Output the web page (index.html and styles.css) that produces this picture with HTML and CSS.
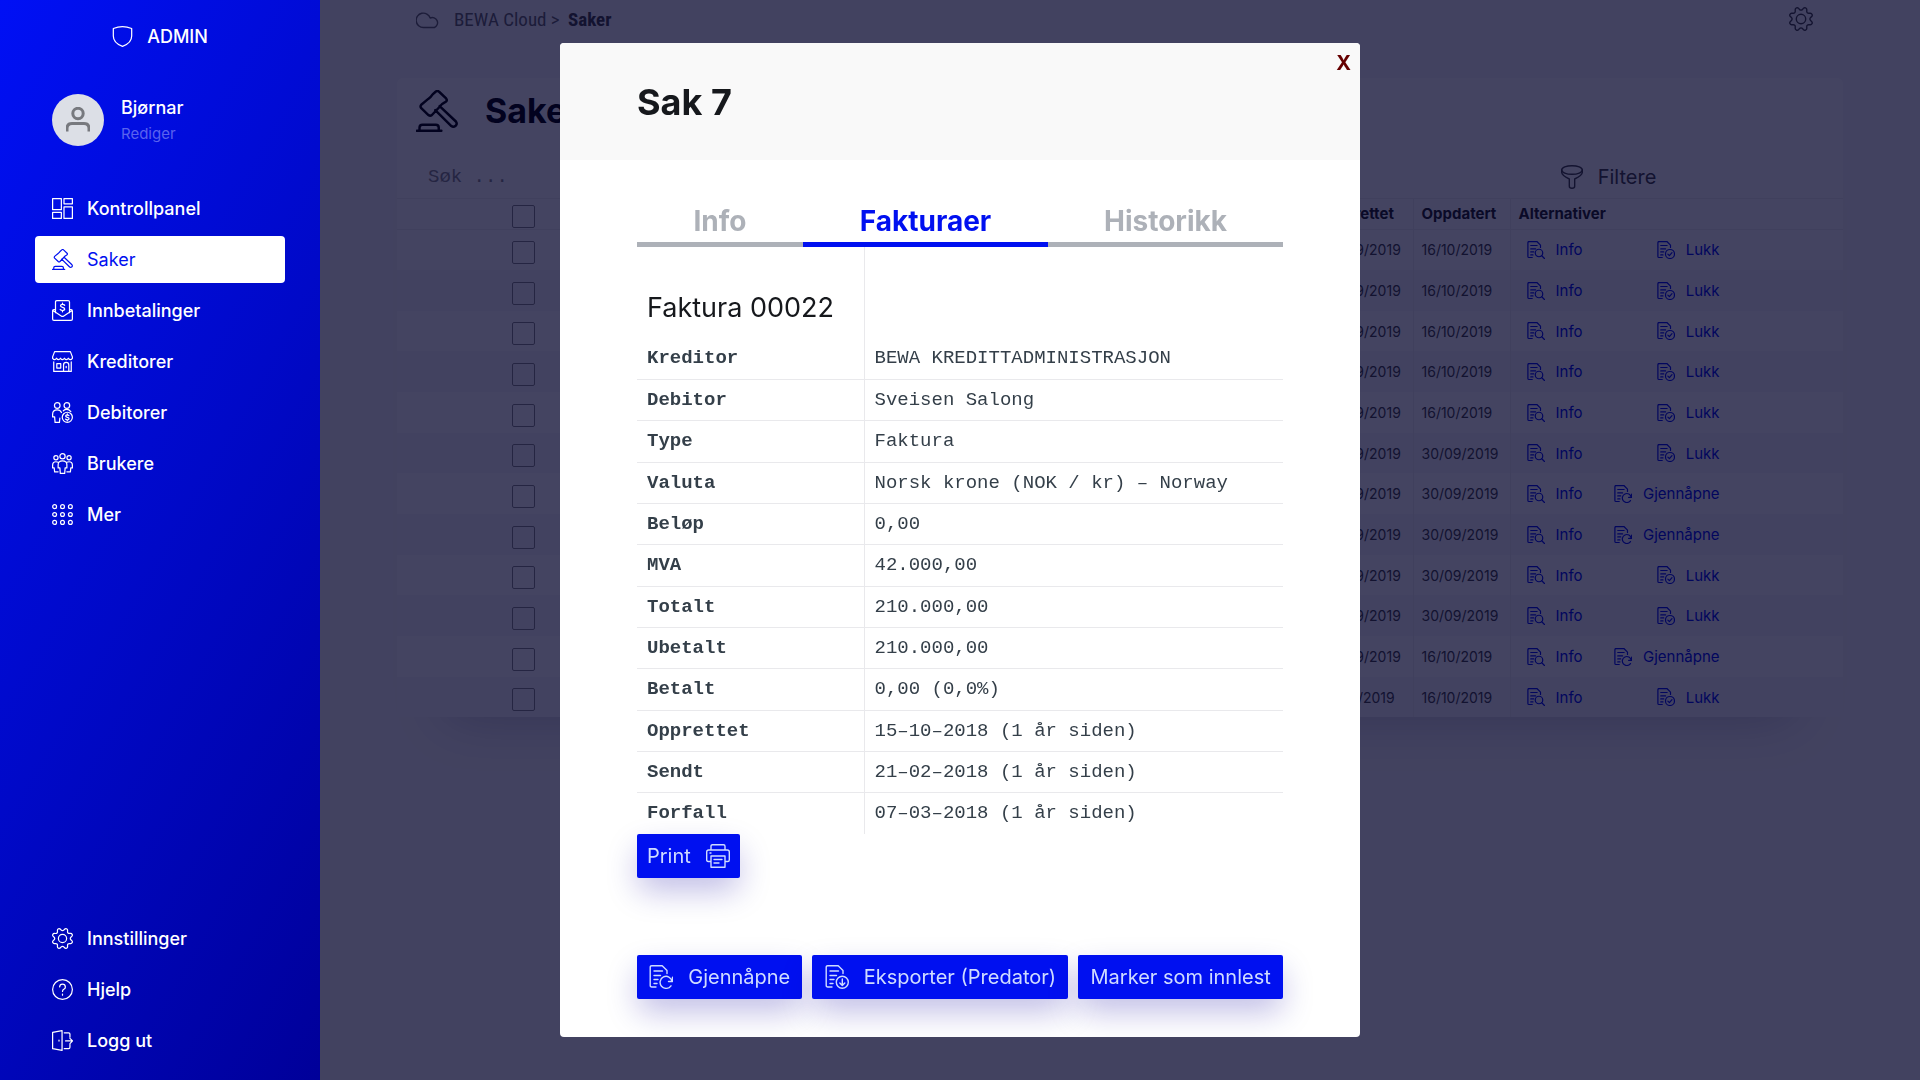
FILE: index.html
```html
<!DOCTYPE html>
<html lang="no">
<head>
<meta charset="utf-8">
<title>BEWA Cloud</title>
<link rel="stylesheet" href="styles.css">
</head>
<body>
<svg class="sprite" aria-hidden="true">
  <symbol id="i-shield" viewBox="0 0 24 24"><path d="M1.500 2.800Q12-1.200 22.500 2.800V11.500c0 5.500-4 9.500-10.500 11.800C5.500 21 1.500 17 1.500 11.500Z"/></symbol>
  <symbol id="i-dash" viewBox="0 0 24 24"><path d="M.7.7h10v12.600h-10zM13.700.7h9.600v6h-9.600zM.7 16.500h10v6.800h-10zM13.700 10.200h9.600v13.100h-9.600z"/></symbol>
  <symbol id="i-gavel" viewBox="0 0 24 24"><path d="M11.200 1q1-1 2 0l4 3.800q.8 1 0 1.800l-.8.500q-2 1-3 2.600l-4.300 4.600q-1 .8-2 0L3 10.400q-.8-1 0-2l4-3.300q1.500-1 2.500-2.600zM13.500 9.200l9.300 8.800q.9 1.200 0 2.300-1.400 1.200-2.600.3L11 11.500M.5 23.300h14M2 23v-1.500q0-1.700 1.700-1.700h7.600q1.700 0 1.700 1.700V23"/></symbol>
  <symbol id="i-mail" viewBox="0 0 24 24"><path d="M4 14.500V2.200Q4 .7 5.500.7h13Q20 .7 20 2.200v12.300M4 11H2.200Q.7 11 .7 12.500v9.300q0 1.500 1.500 1.500h19.600q1.500 0 1.500-1.500v-9.300q0-1.500-1.500-1.500H20M1 12l9.500 6.300q1.500 1 3 0L23 12M14.500 6q-.8-1-2.500-1-2.300 0-2.300 1.700 0 1.300 2.300 1.700 2.500.5 2.500 2 0 1.600-2.500 1.600-1.800 0-2.700-1.200M12 3.500V5m0 7v1.500"/></symbol>
  <symbol id="i-store" viewBox="0 0 24 24"><path d="M3 .7h18l2.300 6v1.600q-2.300 3-4.600 0-2.200 3-4.500 0-2.200 3-4.500 0-2.200 3-4.500 0-2.200 3-4.500 0V6.700zM2 12.500v10.800h20V12.500M5.500 14.500H10v5H5.500zM13.200 23v-7q0-3 3-3t3 3v7M16.200 17.500v1.500"/></symbol>
  <symbol id="i-debtor" viewBox="0 0 24 24"><circle cx="6" cy="4" r="3.200"/><circle cx="17" cy="4" r="3.200"/><path d="M3.500 23.300 3 17H.7v-3q0-5 5.300-5 3.500 0 4.800 3M3.500 23.300h5l.5-5M13 10q1.500-1.500 4-1.500t4.500 2.500"/><circle cx="17.500" cy="17.500" r="5.800"/><path d="M19.300 15.500q-1-.8-2-.8-1.700.1-1.700 1.400 0 1 1.900 1.400 2 .4 2 1.500 0 1.300-1.900 1.400-1.200 0-2.200-.9M17.500 13.500v1m0 6v1"/></symbol>
  <symbol id="i-users" viewBox="0 0 24 24"><circle cx="12" cy="3.700" r="3"/><circle cx="4.500" cy="5.500" r="2.400"/><circle cx="19.500" cy="5.500" r="2.400"/><path d="M9.500 23.300 9 17H7v-3.500Q7 9 12 9t5 4.500V17h-2l-.5 6.300zM7 21.500H3L2.500 17H.7v-3q0-4 3.800-4 1.500 0 2.500.7M17 21.500h4l.5-4.500h1.800v-3q0-4-3.800-4-1.500 0-2.500.7"/></symbol>
  <symbol id="i-grid" viewBox="0 0 24 24"><circle cx="3" cy="3" r="2.200"/><circle cx="12" cy="3" r="2.200"/><circle cx="21" cy="3" r="2.200"/><circle cx="3" cy="12" r="2.200"/><circle cx="12" cy="12" r="2.200"/><circle cx="21" cy="12" r="2.200"/><circle cx="3" cy="21" r="2.200"/><circle cx="12" cy="21" r="2.200"/><circle cx="21" cy="21" r="2.200"/></symbol>
  <symbol id="i-cog" viewBox="0 0 24 24"><path d="M10.546,2.438a1.957,1.957,0,0,0,2.908,0L14.400,1.400a1.959,1.959,0,0,1,3.410,1.413l-.071,1.400A1.958,1.958,0,0,0,19.790,6.267l1.400-.071A1.959,1.959,0,0,1,22.600,9.606l-1.042.940a1.960,1.960,0,0,0,0,2.909l1.042.940a1.959,1.959,0,0,1-1.413,3.410l-1.400-.071a1.958,1.958,0,0,0-2.056,2.056l.071,1.400A1.959,1.959,0,0,1,14.400,22.600l-.941-1.041a1.959,1.959,0,0,0-2.908,0L9.606,22.600A1.959,1.959,0,0,1,6.200,21.192l.072-1.400a1.958,1.958,0,0,0-2.056-2.056l-1.400.071A1.958,1.958,0,0,1,1.400,14.400l1.041-.940a1.960,1.960,0,0,0,0-2.909L1.400,9.606A1.958,1.958,0,0,1,2.809,6.200l1.400.071A1.958,1.958,0,0,0,6.267,4.211L6.200,2.810A1.959,1.959,0,0,1,9.606,1.400Z"/><circle cx="12" cy="12" r="4.700"/></symbol>
  <symbol id="i-help" viewBox="0 0 24 24"><circle cx="12" cy="12" r="11.300"/><path d="M8.700 9q.2-3.200 3.300-3.200T15.300 9q0 1.800-1.800 2.800-1.500.8-1.500 2.400M12 17.300v1.200"/></symbol>
  <symbol id="i-exit" viewBox="0 0 24 24"><path d="M.7 2.700 11.500.7v22.600L.7 21.300zM8 11.500v1.200M14 3.200h5q1.500 0 1.500 1.500v3.500M14 21.300h5q1.500 0 1.500-1.500v-3.300M15.500 12.500h7.800M20.500 9.500l3 3-3 3"/></symbol>
  <symbol id="i-user" viewBox="0 0 24 24"><circle cx="12" cy="5.500" r="5.200"/><path d="M1 23.500v-3q0-5 5-5h12q5 0 5 5v3"/></symbol>
  <symbol id="i-cloud" viewBox="0 0 24 24"><path d="M18.500 20.500H7.500A7.200 7.200 0 1 1 14.200 11 5 5 0 1 1 18.500 20.500z"/></symbol>
  <symbol id="i-funnel" viewBox="0 0 24 24"><ellipse cx="12" cy="5" rx="10.300" ry="4.300"/><path d="M1.700 5v2.500Q2 10.500 9.300 14v7.300q0 2 2.700 2t2.700-2V14q7.300-3.500 7.600-6.500V5"/></symbol>
  <symbol id="i-doc" viewBox="0 0 24 24"><path d="M7 22H2.700Q1.200 22 1.200 20.500V2.200Q1.200.7 2.700.7h10.500L18 5.500v3M5 6h8.500M5 10.500h6.500M5 14.500h4M5 18.500h3"/></symbol>
  <symbol id="i-info" viewBox="0 0 24 24"><use href="#i-doc"/><circle cx="16" cy="16" r="5"/><path d="m19.700 19.700 3.600 3.600"/></symbol>
  <symbol id="i-close" viewBox="0 0 24 24"><use href="#i-doc"/><circle cx="17.300" cy="17.300" r="6"/><path d="m14.500 17.500 2 2 3.500-4"/></symbol>
  <symbol id="i-reopen" viewBox="0 0 24 24"><use href="#i-doc"/><path d="M22 20.800A6 6 0 1 1 23 16.300M23.500 12.200V16.500h-4"/></symbol>
  <symbol id="i-export" viewBox="0 0 24 24"><use href="#i-doc"/><circle cx="17.300" cy="17.300" r="6"/><path d="M17.300 14v6.500M14.800 18l2.500 2.500 2.500-2.500"/></symbol>
  <symbol id="i-print" viewBox="0 0 24 24"><path d="M5 6V2.200Q5 .7 6.500.7h11Q19 .7 19 2.200V6M5 17.500H2.200Q.7 17.500.7 16V8Q.7 6 2.700 6h18.600q2 0 2 2v8q0 1.500-1.500 1.500H19M5 12h14v11.300H5zM8 15.500h8M8 19h5M4 9h1"/></symbol>
</svg>

<div class="app">
  <nav class="sidebar">
    <div class="role"><svg class="icon"><use href="#i-shield"/></svg><span>ADMIN</span></div>
    <div class="profile">
      <span class="avatar"><svg><use href="#i-user"/></svg></span>
      <div class="who"><strong>Bjørnar</strong><a href="#">Rediger</a></div>
    </div>
    <div class="menu">
      <a href="#"><svg class="icon"><use href="#i-dash"/></svg>Kontrollpanel</a>
      <a href="#" class="active"><svg class="icon"><use href="#i-gavel"/></svg>Saker</a>
      <a href="#"><svg class="icon"><use href="#i-mail"/></svg>Innbetalinger</a>
      <a href="#"><svg class="icon"><use href="#i-store"/></svg>Kreditorer</a>
      <a href="#"><svg class="icon"><use href="#i-debtor"/></svg>Debitorer</a>
      <a href="#"><svg class="icon"><use href="#i-users"/></svg>Brukere</a>
      <a href="#"><svg class="icon"><use href="#i-grid"/></svg>Mer</a>
    </div>
    <div class="menu menu-bottom">
      <a href="#"><svg class="icon"><use href="#i-cog"/></svg>Innstillinger</a>
      <a href="#"><svg class="icon"><use href="#i-help"/></svg>Hjelp</a>
      <a href="#"><svg class="icon"><use href="#i-exit"/></svg>Logg ut</a>
    </div>
  </nav>

  <main class="main">
    <header class="topbar">
      <svg class="icon-l"><use href="#i-cloud"/></svg>
      <div class="crumbs"><a href="#">BEWA Cloud</a> &gt; <strong>Saker</strong></div>
      <svg class="icon-l cog"><use href="#i-cog"/></svg>
    </header>
    <section class="card">
      <div class="card-head"><svg><use href="#i-gavel"/></svg><h1>Saker</h1></div>
      <div class="tools">
        <input type="text" class="search" placeholder="Søk ..." aria-label="Søk">
        <button class="filter"><svg class="icon-l"><use href="#i-funnel"/></svg>Filtere</button>
      </div>
      <table class="cases">
        <colgroup><col class="c-check"><col><col class="c-date"><col class="c-upd"><col class="c-act"></colgroup>
        <thead><tr><th><input type="checkbox" aria-label="Velg alle"></th><th></th><th>Opprettet</th><th>Oppdatert</th><th>Alternativer</th></tr></thead>
        <tbody>
          <tr><td><input type="checkbox" aria-label="Velg sak"></td><td></td><td>30/09/2019</td><td>16/10/2019</td><td><div class="acts"><a href="#"><svg><use href="#i-info"/></svg>Info</a><a href="#"><svg><use href="#i-close"/></svg>Lukk</a></div></td></tr>
          <tr><td><input type="checkbox" aria-label="Velg sak"></td><td></td><td>30/09/2019</td><td>16/10/2019</td><td><div class="acts"><a href="#"><svg><use href="#i-info"/></svg>Info</a><a href="#"><svg><use href="#i-close"/></svg>Lukk</a></div></td></tr>
          <tr><td><input type="checkbox" aria-label="Velg sak"></td><td></td><td>30/09/2019</td><td>16/10/2019</td><td><div class="acts"><a href="#"><svg><use href="#i-info"/></svg>Info</a><a href="#"><svg><use href="#i-close"/></svg>Lukk</a></div></td></tr>
          <tr><td><input type="checkbox" aria-label="Velg sak"></td><td></td><td>30/09/2019</td><td>16/10/2019</td><td><div class="acts"><a href="#"><svg><use href="#i-info"/></svg>Info</a><a href="#"><svg><use href="#i-close"/></svg>Lukk</a></div></td></tr>
          <tr><td><input type="checkbox" aria-label="Velg sak"></td><td></td><td>30/09/2019</td><td>16/10/2019</td><td><div class="acts"><a href="#"><svg><use href="#i-info"/></svg>Info</a><a href="#"><svg><use href="#i-close"/></svg>Lukk</a></div></td></tr>
          <tr><td><input type="checkbox" aria-label="Velg sak"></td><td></td><td>30/09/2019</td><td>30/09/2019</td><td><div class="acts"><a href="#"><svg><use href="#i-info"/></svg>Info</a><a href="#"><svg><use href="#i-close"/></svg>Lukk</a></div></td></tr>
          <tr><td><input type="checkbox" aria-label="Velg sak"></td><td></td><td>30/09/2019</td><td>30/09/2019</td><td><div class="acts"><a href="#"><svg><use href="#i-info"/></svg>Info</a><a href="#"><svg><use href="#i-reopen"/></svg>Gjennåpne</a></div></td></tr>
          <tr><td><input type="checkbox" aria-label="Velg sak"></td><td></td><td>30/09/2019</td><td>30/09/2019</td><td><div class="acts"><a href="#"><svg><use href="#i-info"/></svg>Info</a><a href="#"><svg><use href="#i-reopen"/></svg>Gjennåpne</a></div></td></tr>
          <tr><td><input type="checkbox" aria-label="Velg sak"></td><td></td><td>30/09/2019</td><td>30/09/2019</td><td><div class="acts"><a href="#"><svg><use href="#i-info"/></svg>Info</a><a href="#"><svg><use href="#i-close"/></svg>Lukk</a></div></td></tr>
          <tr><td><input type="checkbox" aria-label="Velg sak"></td><td></td><td>30/09/2019</td><td>30/09/2019</td><td><div class="acts"><a href="#"><svg><use href="#i-info"/></svg>Info</a><a href="#"><svg><use href="#i-close"/></svg>Lukk</a></div></td></tr>
          <tr><td><input type="checkbox" aria-label="Velg sak"></td><td></td><td>30/09/2019</td><td>16/10/2019</td><td><div class="acts"><a href="#"><svg><use href="#i-info"/></svg>Info</a><a href="#"><svg><use href="#i-reopen"/></svg>Gjennåpne</a></div></td></tr>
          <tr><td><input type="checkbox" aria-label="Velg sak"></td><td></td><td>16/10/2019</td><td>16/10/2019</td><td><div class="acts"><a href="#"><svg><use href="#i-info"/></svg>Info</a><a href="#"><svg><use href="#i-close"/></svg>Lukk</a></div></td></tr>
        </tbody>
      </table>
    </section>
  </main>
</div>

<div class="overlay"></div>
<div class="modal-wrap">
  <div class="modal" role="dialog" aria-labelledby="modal-title">
    <header class="modal-head"><h2 id="modal-title">Sak 7</h2><button class="x" aria-label="Lukk">X</button></header>
    <div class="modal-body">
      <div class="tabs" role="tablist">
        <button role="tab">Info</button><button role="tab" class="on" aria-selected="true">Fakturaer</button><button role="tab">Historikk</button>
      </div>
      <table class="invoice">
        <thead><tr><th><h3>Faktura 00022</h3></th><td></td></tr></thead>
        <tbody>
          <tr><th>Kreditor</th><td>BEWA KREDITTADMINISTRASJON</td></tr>
          <tr><th>Debitor</th><td>Sveisen Salong</td></tr>
          <tr><th>Type</th><td>Faktura</td></tr>
          <tr><th>Valuta</th><td>Norsk krone (NOK / kr) – Norway</td></tr>
          <tr><th>Beløp</th><td>0,00</td></tr>
          <tr><th>MVA</th><td>42.000,00</td></tr>
          <tr><th>Totalt</th><td>210.000,00</td></tr>
          <tr><th>Ubetalt</th><td>210.000,00</td></tr>
          <tr><th>Betalt</th><td>0,00 (0,0%)</td></tr>
          <tr><th>Opprettet</th><td>15–10–2018 (1 år siden)</td></tr>
          <tr><th>Sendt</th><td>21–02–2018 (1 år siden)</td></tr>
          <tr><th>Forfall</th><td>07–03–2018 (1 år siden)</td></tr>
        </tbody>
      </table>
      <button class="btn">Print<svg><use href="#i-print"/></svg></button>
      <div class="actions">
        <button class="btn"><svg><use href="#i-reopen"/></svg>Gjennåpne</button>
        <button class="btn"><svg><use href="#i-export"/></svg>Eksporter (Predator)</button>
        <button class="btn">Marker som innlest</button>
      </div>
    </div>
  </div>
</div>
</body>
</html>
```
FILE: styles.css
```css
* { box-sizing: border-box; }
body {
  margin: 0;
  font-family: Inter, sans-serif;
  color: #000;
  background: #f7f7f9;
}
h1, h2, h3 { margin: 0; }
a { color: inherit; text-decoration: none; }
button { border: 0; padding: 0; background: none; font: inherit; color: inherit; cursor: pointer; }
svg { fill: none; stroke: currentColor; stroke-width: 1.4; stroke-linecap: round; stroke-linejoin: round; flex: none; overflow: visible; }
.sprite { display: none; }
.icon { width: 21px; height: 21px; }
.icon-l { width: 24px; height: 24px; }

.app { display: flex; min-height: 100vh; }

/* Sidebar */
.sidebar {
  flex: 0 0 320px;
  display: flex;
  flex-direction: column;
  padding: 22px 35px 16px;
  color: #fff;
  background: linear-gradient(120deg, #0010f5 0%, #0009c8 50%, #000099 100%);
}
.role { display: flex; justify-content: center; align-items: center; gap: 14px; height: 28px; font-size: 18px; font-weight: 500; }
.profile { display: flex; align-items: center; gap: 17px; margin-top: 44px; padding-left: 17px; }
.avatar { display: grid; place-items: center; width: 52px; height: 52px; border-radius: 50%; background: #dcdfe6; color: #77797e; }
.avatar svg { width: 24px; height: 26px; stroke-width: 3; stroke-linecap: butt; }
.who { display: flex; flex-direction: column; gap: 4px; }
.who strong { font-size: 18px; line-height: 24px; font-weight: 500; }
.who a { font-size: 15px; line-height: 20px; color: #5a62ee; }
.menu { display: flex; flex-direction: column; gap: 4px; margin-top: 39px; }
.menu a { display: flex; align-items: center; gap: 14px; height: 47px; padding-left: 17px; border-radius: 4px; font-size: 18px; font-weight: 500; }
.menu .active { background: #fff; color: #0010f0; font-weight: 400; }
.menu-bottom { margin-top: auto; }

/* Page */
.main { flex: 1; min-width: 0; padding: 0 77px; }
.topbar { display: flex; align-items: center; gap: 14px; height: 38px; padding: 0 30px 0 19px; color: #666; }
.crumbs { font-family: "Liberation Sans Narrow", "Roboto Condensed", Roboto, sans-serif; font-size: 19px; white-space: pre; }
.crumbs strong { margin-left: 4px; color: #444; }
.cog { margin-left: auto; color: #444; }
.card { margin-top: 40px; border-radius: 6px; background: #fff; box-shadow: 0 50px 50px -50px rgba(0, 0, 60, .22); }
.card-head { display: flex; align-items: center; gap: 27px; height: 66px; padding: 0 19px; }
.card-head svg { width: 42px; height: 42px; }
.card-head h1 { font-size: 34px; line-height: 40px; }
.tools { display: grid; grid-template-columns: 27fr 13fr; height: 55px; align-items: end; border-bottom: 1px solid #eee; }
.search { height: 42px; padding: 0 31px; border: 0; background: none; font: 19px "Liberation Mono", monospace; }
.search::placeholder { color: #888; }
.filter { display: flex; justify-content: center; align-items: center; gap: 14px; height: 42px; font-size: 20px; color: #444; }

.cases { width: 100%; table-layout: fixed; border-collapse: collapse; font-size: 14px; }
.c-check { width: 150px; }
.c-date, .c-upd { width: 97px; }
.c-act { width: 333px; }
.cases th, .cases td { padding: 0 8px; text-align: left; white-space: nowrap; }
.cases th { height: 30px; font-size: 15px; color: #222; border-bottom: 1px solid #eee; }
.cases td { height: 41px; color: #444; }
.cases tr:nth-child(3n) td { height: 40px; }
.cases tbody tr:nth-child(even) { background: #f8f8fa; }
.cases :is(th, td):nth-child(n+4) { border-left: 1px solid #eee; }
.cases :is(th, td):first-child { text-align: right; padding: 5px 12px 0 0; }
.cases input { appearance: none; display: block; width: 23px; height: 23px; margin: 0 0 0 auto; border: 1px solid #888; border-radius: 2px; }
.acts { display: flex; justify-content: space-between; width: 201px; padding-left: 8px; font-size: 15px; color: #0010f0; }
.acts a { display: flex; align-items: center; gap: 11px; }
.acts svg { width: 18px; height: 18px; stroke-width: 1.6; }

/* Modal */
.overlay { position: fixed; inset: 0 0 0 320px; background: rgba(3, 3, 42, .74); }
.modal-wrap { position: absolute; inset: 43px 0 auto; display: flex; justify-content: center; }
.modal { width: 800px; border-radius: 4px; background: #fff; overflow: hidden; }
.modal-head { display: flex; justify-content: space-between; align-items: flex-start; padding: 39px 9px 38px 77px; background: #f9f9f9; }
.modal-head h2 { font-size: 36px; line-height: 40px; color: #16181c; }
.x { margin-top: -31px; font-size: 20px; line-height: 24px; font-weight: 700; color: #600; }
.modal-body { padding: 35px 77px 38px; }
.tabs { display: grid; grid-template-columns: 166fr 245fr 235fr; }
.tabs button { height: 52px; border-bottom: 5px solid #adb1b8; font-size: 28px; line-height: 46px; padding-top: 3px; font-weight: 700; color: #adb1b8; }
.tabs .on { color: #0010f0; border-color: #0010f0; }
.invoice { width: 100%; table-layout: fixed; border-collapse: collapse; font: 19px "Liberation Mono", monospace; color: #343f49; }
.invoice th { width: 227px; text-align: left; border-right: 1px solid #e9e9ec; }
.invoice th, .invoice td { height: 41px; padding: 0 10px; white-space: nowrap; }
.invoice tbody tr:nth-child(3n) > * { height: 42px; }
.invoice thead th { height: 91px; padding-top: 30px; }
.invoice h3 { font: 400 27px Inter, sans-serif; color: #16181c; }
.invoice tbody tr + tr { border-top: 1px solid #e9e9ec; }
.btn {
  display: flex;
  justify-content: center;
  align-items: center;
  gap: 15px;
  height: 44px;
  padding: 0 10px;
  border-radius: 2px;
  background: #0010f0;
  color: #cfdcff;
  font-size: 20px;
  white-space: nowrap;
  box-shadow: 0 14px 32px -2px rgba(20, 10, 160, .28);
}
.btn svg { width: 24px; height: 24px; }
.actions { display: flex; gap: 10px; margin-top: 77px; }
.actions .btn { flex: 1 1 auto; }
```
